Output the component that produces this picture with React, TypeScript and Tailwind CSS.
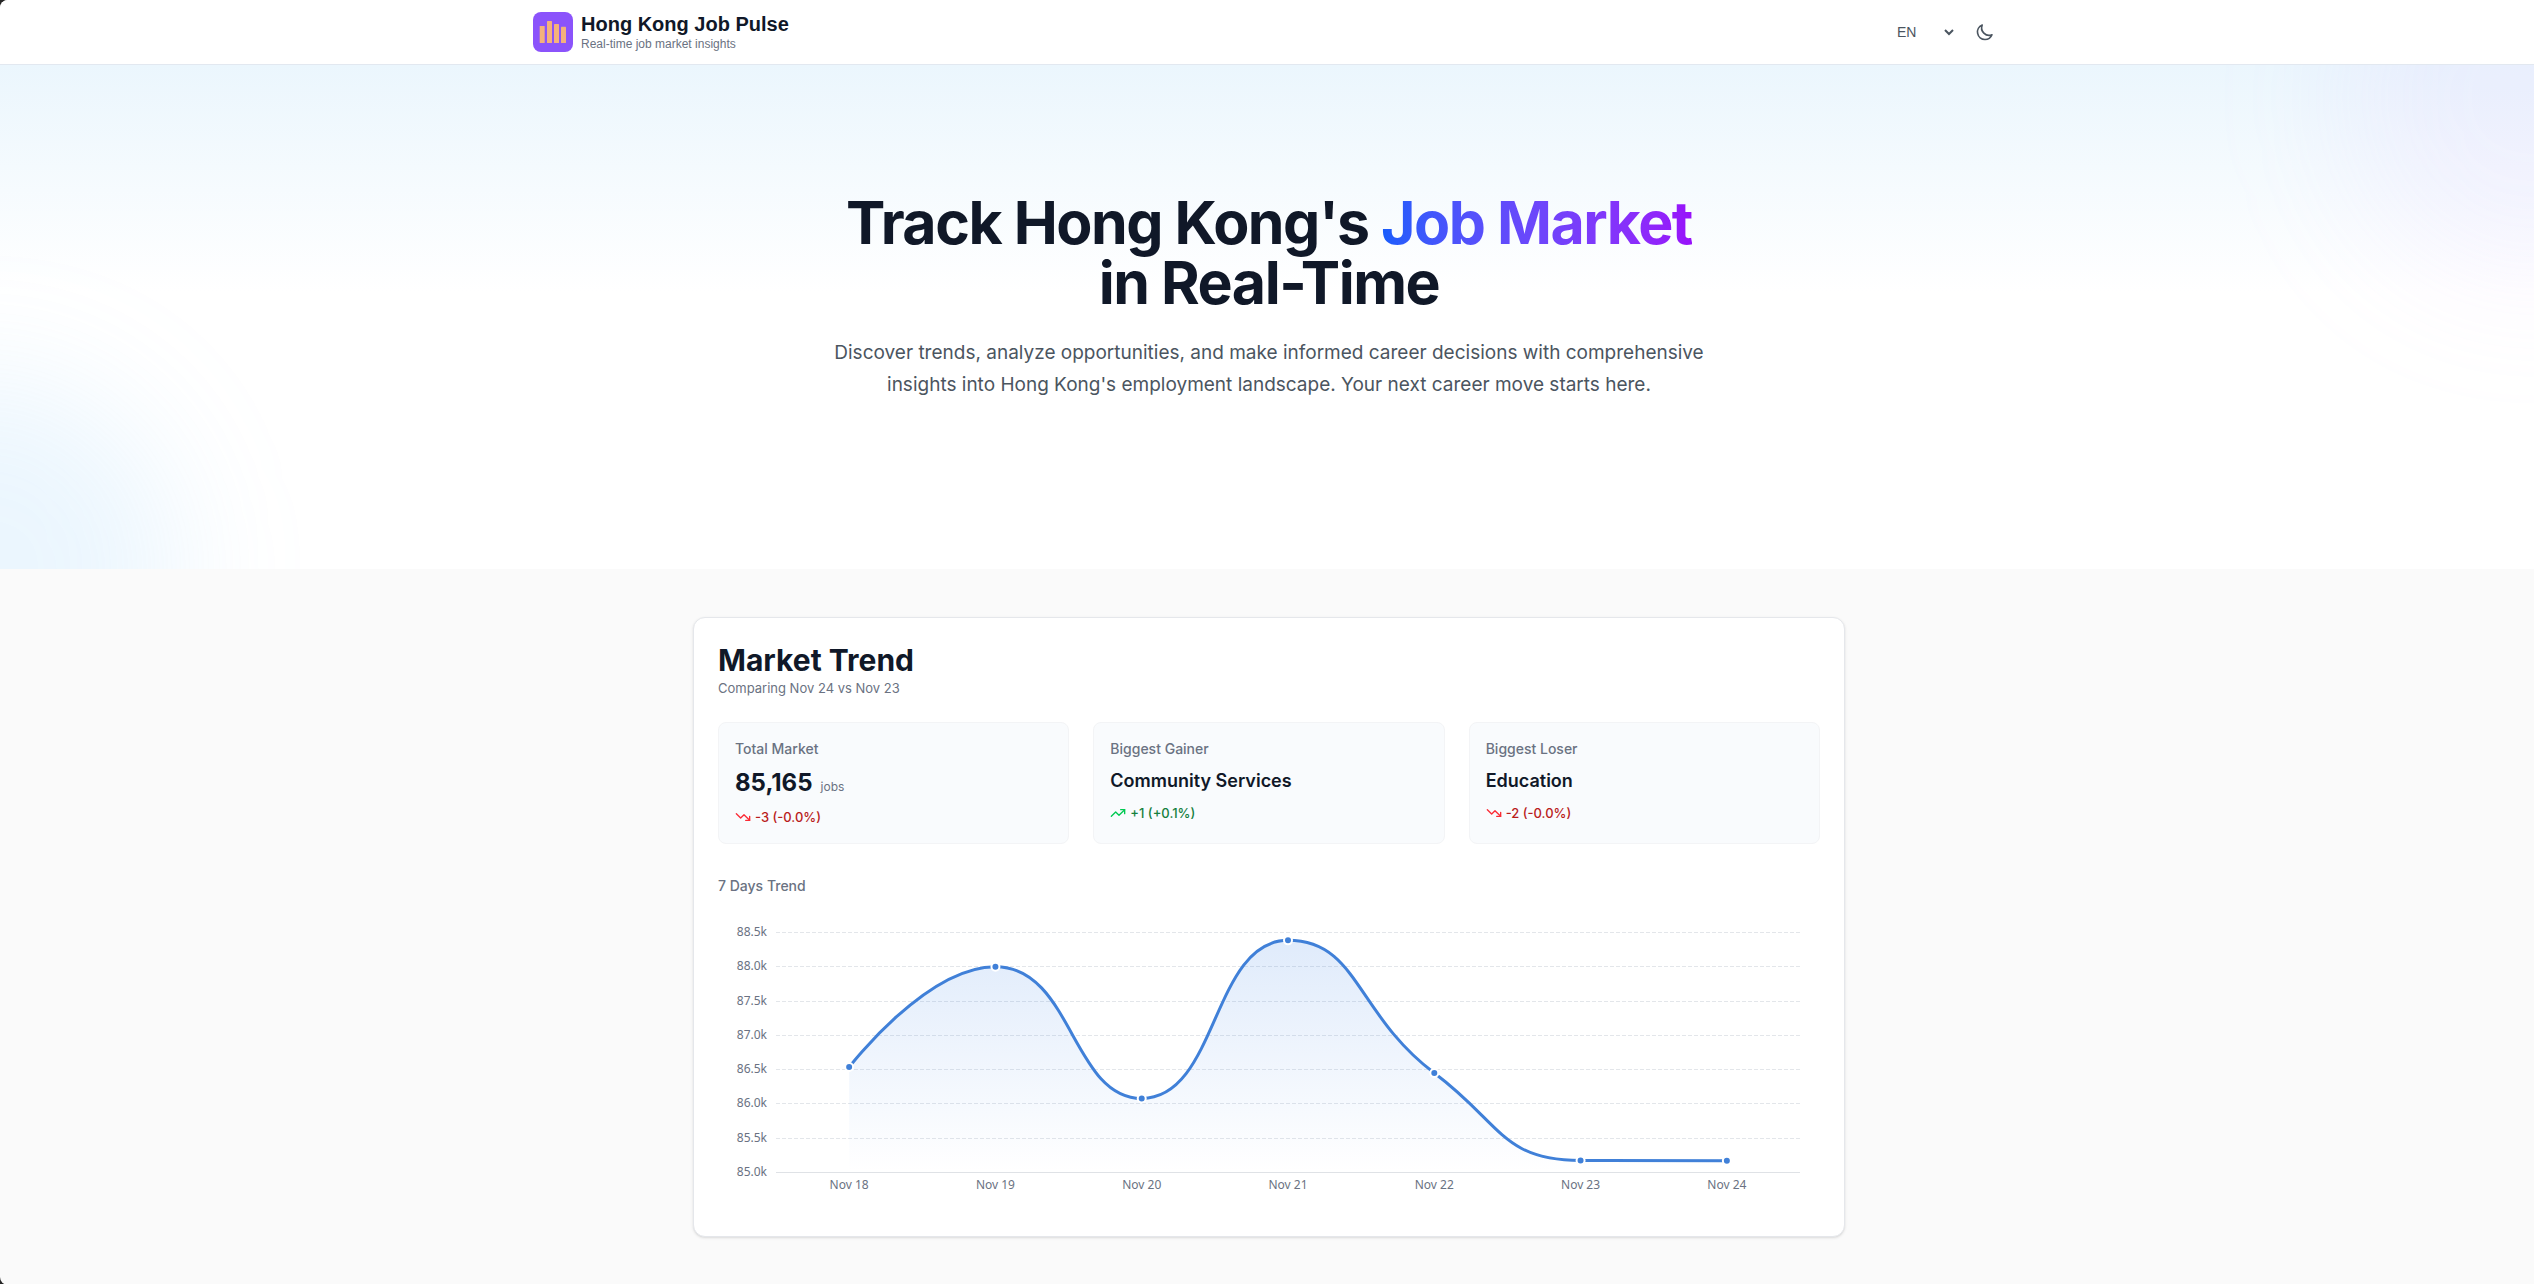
import React from 'react';
import { TrendingDown, TrendingUp } from 'lucide-react';

interface TrendPoint {
    label: string;
    value: number;
}

interface Stat {
    title: string;
    value: string;
    unit?: string;
    delta: string;
    up?: boolean;
}

const points: TrendPoint[] = [
    { label: 'Nov 18', value: 86530 },
    { label: 'Nov 19', value: 87995 },
    { label: 'Nov 20', value: 86073 },
    { label: 'Nov 21', value: 88378 },
    { label: 'Nov 22', value: 86443 },
    { label: 'Nov 23', value: 85168 },
    { label: 'Nov 24', value: 85165 },
];

const stats: Stat[] = [
    { title: 'Total Market', value: '85,165', unit: 'jobs', delta: '-3 (-0.0%)' },
    { title: 'Biggest Gainer', value: 'Community Services', delta: '+1 (+0.1%)', up: true },
    { title: 'Biggest Loser', value: 'Education', delta: '-2 (-0.0%)' },
];

const ticks = [88500, 88000, 87500, 87000, 86500, 86000, 85500, 85000];

const chart = { width: 1102, height: 300, left: 58, right: 1082, top: 20, bottom: 260 };

const toY = (value: number) =>
    chart.bottom - ((value - 85000) / 3500) * (chart.bottom - chart.top);

const clamp = (v: number, a: number, b: number) =>
    Math.max(Math.min(v, Math.max(a, b)), Math.min(a, b));

// Cubic path through every point; the handles never leave the box of their segment
const smoothPath = (pts: number[][]) => {
    let d = `M${pts[0][0]} ${pts[0][1]}`;
    let [cx0, cy0] = pts[0];

    for (let i = 1; i < pts.length; i++) {
        const [px, py] = pts[i - 1];
        const [x, y] = pts[i];
        let cx1 = x;
        let cy1 = y;
        let nx0 = x;
        let ny0 = y;

        if (i < pts.length - 1) {
            const [nx, ny] = pts[i + 1];
            const prev = Math.hypot(x - px, y - py);
            const next = Math.hypot(nx - x, ny - y);
            const ratio = next / (next + prev);

            nx0 = clamp(x + (nx - px) * 0.5 * ratio, x, nx);
            ny0 = clamp(y + (ny - py) * 0.5 * ratio, y, ny);
            cx1 = clamp(x - ((nx0 - x) * prev) / next, px, x);
            cy1 = clamp(y - ((ny0 - y) * prev) / next, py, y);
            nx0 = x + ((x - cx1) * next) / prev;
            ny0 = y + ((y - cy1) * next) / prev;
        }

        d += `C${cx0} ${cy0} ${cx1} ${cy1} ${x} ${y}`;
        cx0 = nx0;
        cy0 = ny0;
    }

    return d;
};

const Logo: React.FC = () => (
    <svg viewBox="0 0 40 40" className="size-10" aria-hidden="true">
        <rect width="40" height="40" rx="8" fill="#8b53fb" />
        <g fill="#f4b17c">
            <rect x="6.7" y="14" width="5" height="17" rx="0.5" />
            <rect x="14" y="9" width="5" height="22" rx="0.5" />
            <rect x="21" y="12" width="5" height="19" rx="0.5" />
            <rect x="28" y="14.7" width="5" height="16.3" rx="0.5" />
        </g>
    </svg>
);

const MoonIcon: React.FC = () => (
    <svg viewBox="0 0 24 24" className="size-5" fill="none" stroke="currentColor" strokeWidth="2" strokeLinecap="round" strokeLinejoin="round" aria-hidden="true">
        <path d="M20.354 15.354A9 9 0 0 1 8.646 3.646 9.003 9.003 0 0 0 12 21a9.003 9.003 0 0 0 8.354-5.646z" />
    </svg>
);

const Header: React.FC = () => (
    <header className="border-b border-slate-200 bg-white pl-1">
        <div className="mx-auto flex h-16 max-w-[1536px] items-center justify-between px-8 font-['Liberation_Sans',sans-serif]">
            <a href="#" className="flex items-center gap-2">
                <Logo />
                <div>
                    <div className="text-xl leading-6 font-bold text-gray-900">Hong Kong Job Pulse</div>
                    <p className="text-xs leading-4 text-gray-500">Real-time job market insights</p>
                </div>
            </a>
            <div className="flex items-center gap-2">
                <select aria-label="Language" defaultValue="en" className="w-16 bg-transparent text-sm text-[#4b5560]">
                    <option value="en">EN</option>
                    <option value="tc">繁中</option>
                    <option value="sc">简中</option>
                </select>
                <button type="button" aria-label="Toggle dark mode" className="rounded-lg p-2.5 text-[#4b5560]">
                    <MoonIcon />
                </button>
            </div>
        </div>
    </header>
);

const Hero: React.FC = () => (
    <section className="relative overflow-hidden bg-white bg-linear-to-b from-[#ebf6fd] to-white to-45% py-32 pl-1">
        <div className="absolute -top-40 -right-48 size-96 rounded-full bg-purple-300/10 blur-3xl" />
        <div className="absolute -bottom-48 -left-52 size-96 rounded-full bg-[#7cc0f5]/15 blur-3xl" />
        <div className="relative mx-auto mb-10 max-w-4xl text-center">
            <h1 className="text-[59px] leading-[60px] font-bold tracking-tight text-gray-900">
                Track Hong Kong's{' '}
                <span className="bg-linear-to-r from-blue-600 to-purple-600 bg-clip-text text-transparent">Job Market</span>
                <br />
                in Real-Time
            </h1>
            <p className="mt-6 text-[19px] leading-8 text-[#4b5560]">
                Discover trends, analyze opportunities, and make informed career decisions with comprehensive insights into Hong Kong's employment landscape. Your next career move starts here.
            </p>
        </div>
    </section>
);

const StatCard: React.FC<{ stat: Stat }> = ({ stat }) => {
    const Icon = stat.up ? TrendingUp : TrendingDown;

    return (
        <div className="rounded-lg border border-gray-100 bg-[#f9fbfd] p-4">
            <h3 className="text-sm font-medium text-gray-500">{stat.title}</h3>
            {stat.unit ? (
                <p className="mt-2 flex items-baseline gap-2 text-2xl font-bold text-gray-900">
                    {stat.value}
                    <span className="text-xs font-normal text-gray-500">{stat.unit}</span>
                </p>
            ) : (
                <p className="mt-2 text-lg leading-7 font-semibold text-gray-900">{stat.value}</p>
            )}
            <p className={`mt-2 flex items-center gap-1 text-[13px] leading-5 font-medium ${stat.up ? 'text-[#15803d]' : 'text-[#b91c1c]'}`}>
                <Icon className={stat.up ? 'size-4 text-green-500' : 'size-4 text-red-500'} />
                {stat.delta}
            </p>
        </div>
    );
};

const TrendChart: React.FC = () => {
    const step = (chart.right - chart.left) / points.length;
    const coords = points.map((p, i) => [chart.left + step * (i + 0.5), toY(p.value)]);
    const line = smoothPath(coords);
    const area = `${line}V${chart.bottom}H${coords[0][0]}Z`;

    return (
        <svg viewBox={`0 0 ${chart.width} ${chart.height}`} className="mt-4 h-auto w-full font-['Noto_Sans',sans-serif]" role="img" aria-label="7 Days Trend">
            <defs>
                <linearGradient id="area" x1="0" y1="0" x2="0" y2="1">
                    <stop offset="0" stopColor="#3b82e6" stopOpacity="0.16" />
                    <stop offset="1" stopColor="#3b82e6" stopOpacity="0" />
                </linearGradient>
            </defs>
            {ticks.map((tick) => {
                const y = Math.round(toY(tick)) + 0.5;
                const base = tick === 85000;

                return (
                    <g key={tick}>
                        <line x1={chart.left} x2={chart.right} y1={y} y2={y} stroke={base ? '#dfe2e6' : '#e3e6ea'} strokeDasharray={base ? undefined : '4 2'} />
                        <text x="49" y={y + 3} textAnchor="end" className="fill-gray-500 text-xs">{(tick / 1000).toFixed(1)}k</text>
                    </g>
                );
            })}
            <path d={area} fill="url(#area)" />
            <path d={line} fill="none" stroke="#4080d8" strokeWidth="3" />
            {points.map((p, i) => (
                <g key={p.label}>
                    <circle cx={coords[i][0]} cy={coords[i][1]} r="4" fill="#4080d8" stroke="#fff" strokeWidth="2" />
                    <text x={coords[i][0]} y="277" textAnchor="middle" className="fill-gray-500 text-xs">{p.label}</text>
                </g>
            ))}
        </svg>
    );
};

const App: React.FC = () => {
    return (
        <div className="min-h-screen bg-neutral-800">
            <div className="min-h-screen overflow-hidden rounded-l-lg bg-[#fafafa] font-[Inter,sans-serif]">
                <Header />
                <main>
                    <Hero />
                    <section className="py-12 pl-1">
                        <div className="mx-auto max-w-6xl rounded-xl border border-gray-200 bg-white p-6 shadow-sm">
                            <h2 className="text-3xl leading-9 font-bold text-gray-900">Market Trend</h2>
                            <p className="text-[13px] leading-5 text-gray-500">Comparing Nov 24 vs Nov 23</p>
                            <div className="mt-6 grid grid-cols-3 gap-6">
                                {stats.map((stat) => (
                                    <StatCard key={stat.title} stat={stat} />
                                ))}
                            </div>
                            <h3 className="mt-8 text-sm font-medium text-gray-500">7 Days Trend</h3>
                            <TrendChart />
                        </div>
                    </section>
                </main>
            </div>
        </div>
    );
};

export default App;
